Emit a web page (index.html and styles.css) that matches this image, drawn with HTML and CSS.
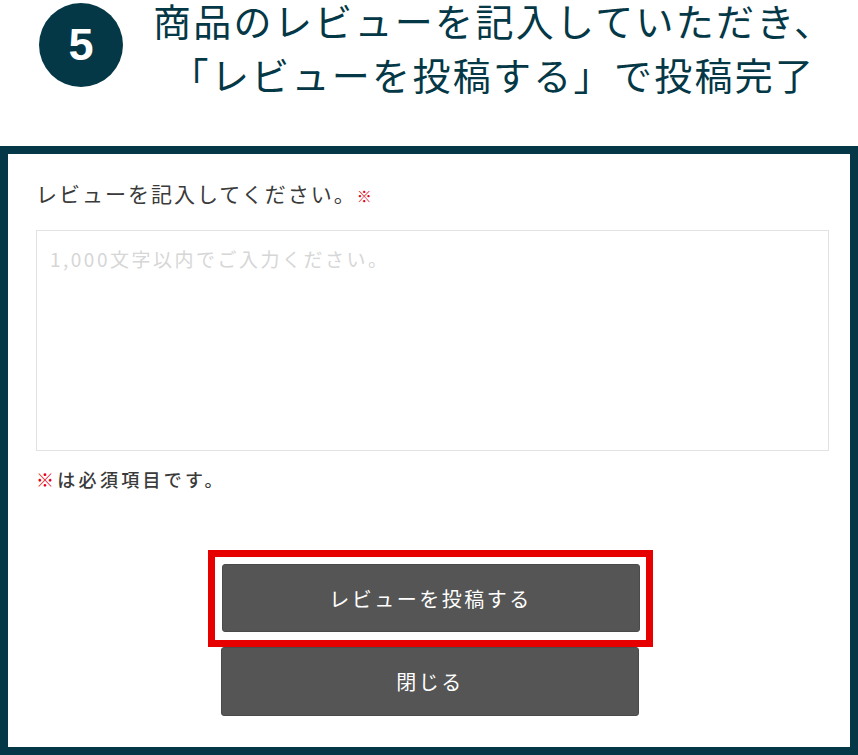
FILE: index.html
```html
<!DOCTYPE html>
<html lang="ja">
<head>
<meta charset="utf-8">
<title>レビュー投稿</title>
<link rel="stylesheet" href="styles.css">
</head>
<body>
<header class="step">
  <div class="step-num">5</div>
  <h1 class="step-title"><span class="line">商品のレビューを記入していただき、</span><span class="line line-2">「レビューを投稿する」で投稿完了</span></h1>
</header>
<section class="panel">
  <p class="label">レビューを記入してください。<span class="req">※</span></p>
  <textarea class="review" placeholder="1,000文字以内でご入力ください。"></textarea>
  <p class="note"><span class="req-note">※</span>は必須項目です。</p>
  <div class="actions">
    <div class="highlight">
      <button class="btn" type="button">レビューを投稿する</button>
    </div>
    <button class="btn btn-close" type="button">閉じる</button>
  </div>
</section>
</body>
</html>
```
FILE: styles.css
```css
html, body {
  margin: 0;
  padding: 0;
  background: #ffffff;
}
body {
  width: 858px;
  height: 755px;
  overflow: hidden;
  font-family: "Noto Sans CJK JP", "Noto Sans", sans-serif;
  color: #333333;
}
.step {
  display: flex;
  align-items: flex-start;
  height: 146px;
  padding-left: 39px;
  box-sizing: border-box;
}
.step-num {
  width: 84px;
  height: 84px;
  margin-top: 3px;
  border-radius: 50%;
  background: #043846;
  color: #ffffff;
  display: flex;
  align-items: center;
  justify-content: center;
  font-family: "Liberation Sans", Arial, sans-serif;
  font-weight: 700;
  font-size: 45px;
  flex-shrink: 0;
}
.step-title {
  margin: 0 0 0 30px;
  width: 680px;
  text-align: center;
  white-space: nowrap;
  font-size: 38px;
  letter-spacing: 2.3px;
  font-weight: 400;
  color: #043846;
}
.line {
  display: block;
  line-height: 40px;
}
.line-2 {
  margin-top: 14px;
}
.panel {
  border: 8px solid #043846;
  height: 609px;
  box-sizing: border-box;
  padding: 24px 21px 0 28px;
}
.label {
  margin: 0 0 19px;
  font-size: 21px;
  line-height: 30px;
  letter-spacing: 2px;
  color: #3a3a3a;
}
.label-text {
  letter-spacing: 2px;
}
.req {
  color: #e60012;
  font-size: 15px;
  letter-spacing: 0;
}
.review {
  display: block;
  width: 793px;
  height: 221px;
  box-sizing: border-box;
  margin: 0;
  border: 1px solid #e2e2e2;
  border-radius: 0;
  padding: 14px 13px;
  resize: none;
  font-family: "Noto Sans CJK JP", "Noto Sans", sans-serif;
  font-size: 19px;
  line-height: 28px;
  letter-spacing: 2.5px;
  color: #333333;
  background: #ffffff;
  outline: none;
}
.review::placeholder {
  color: #d6d6d6;
  opacity: 1;
}
.note {
  margin: 15px 0 0;
  font-size: 18px;
  line-height: 27px;
  letter-spacing: 3.3px;
  font-weight: 500;
  color: #3a3a3a;
}
.req-note {
  color: #e60012;
}
.actions {
  display: flex;
  flex-direction: column;
  align-items: center;
  margin: 57px 0 0 -5px;
}
.highlight {
  border: 7px solid #e60000;
  padding: 7px 6px 8px 7px;
}
.btn {
  display: block;
  width: 418px;
  height: 68px;
  margin: 0;
  border: 1px solid #4a4a4a;
  border-radius: 3px;
  background: #555555;
  color: #ffffff;
  font-family: "Noto Sans CJK JP", "Noto Sans", sans-serif;
  font-size: 20px;
  letter-spacing: 2.5px;
  cursor: pointer;
  padding: 0;
}
.btn-close {
  margin-top: 0;
  height: 69px;
}
```
